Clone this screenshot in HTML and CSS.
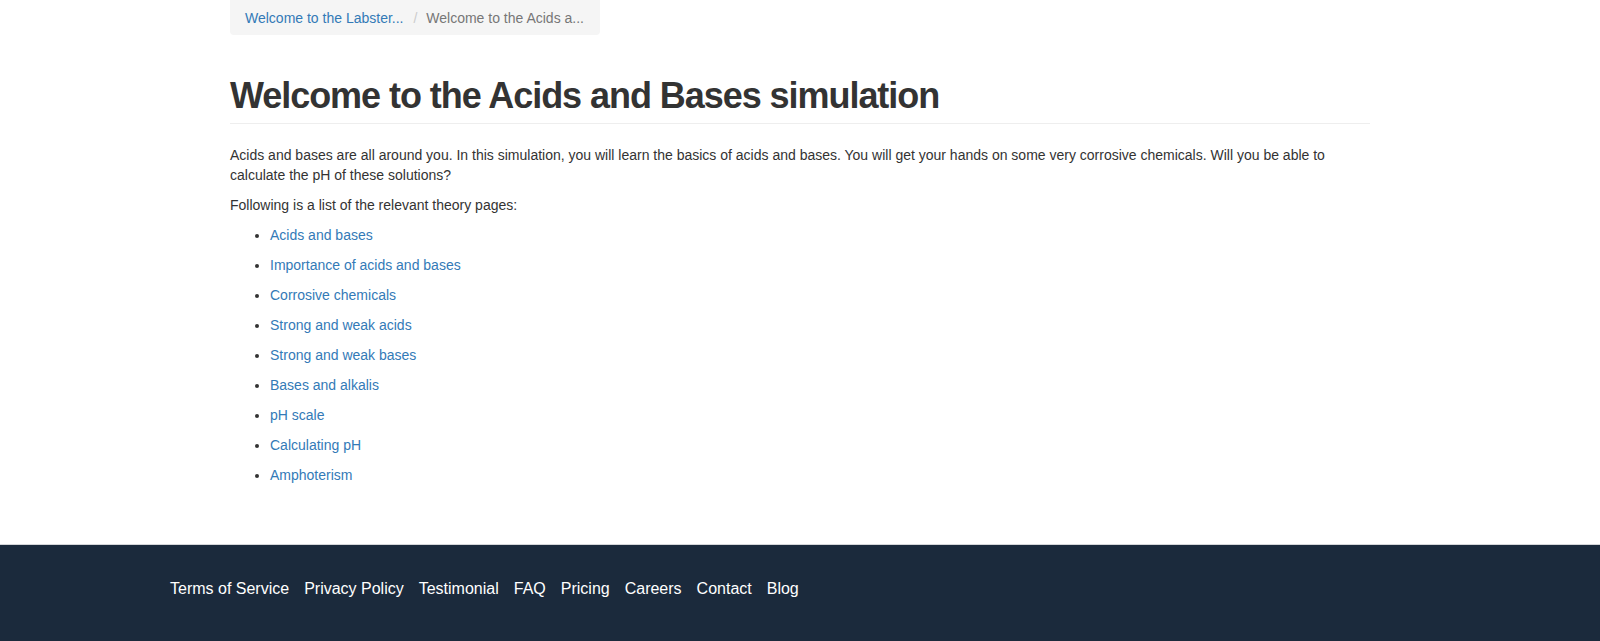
FILE: index.html
```html
<!DOCTYPE html>
<html lang="en">
<head>
<meta charset="utf-8">
<title>Welcome to the Acids and Bases simulation</title>
<link rel="stylesheet" href="styles.css">
</head>
<body>
<div class="page">
  <main class="container">
    <ol class="breadcrumb">
      <li><a href="#">Welcome to the Labster...</a></li>
      <li class="active">Welcome to the Acids a...</li>
    </ol>
    <div class="page-header">
      <h1>Welcome to the Acids and Bases simulation</h1>
    </div>
    <p>Acids and bases are all around you. In this simulation, you will learn the basics of acids and bases. You will get your hands on some very corrosive chemicals. Will you be able to calculate the pH of these solutions?</p>
    <p>Following is a list of the relevant theory pages:</p>
    <ul class="theory">
      <li><a href="#">Acids and bases</a></li>
      <li><a href="#">Importance of acids and bases</a></li>
      <li><a href="#">Corrosive chemicals</a></li>
      <li><a href="#">Strong and weak acids</a></li>
      <li><a href="#">Strong and weak bases</a></li>
      <li><a href="#">Bases and alkalis</a></li>
      <li><a href="#">pH scale</a></li>
      <li><a href="#">Calculating pH</a></li>
      <li><a href="#">Amphoterism</a></li>
    </ul>
  </main>
  <footer class="footer">
    <nav class="footer-nav">
      <a href="#">Terms of Service</a>
      <a href="#">Privacy Policy</a>
      <a href="#">Testimonial</a>
      <a href="#">FAQ</a>
      <a href="#">Pricing</a>
      <a href="#">Careers</a>
      <a href="#">Contact</a>
      <a href="#">Blog</a>
    </nav>
  </footer>
</div>
</body>
</html>
```
FILE: styles.css
```css
* { box-sizing: border-box; }

html, body {
  margin: 0;
  padding: 0;
  background: #fff;
}

body {
  font-family: "Liberation Sans", Arial, Helvetica, sans-serif;
  font-size: 14px;
  line-height: 20px;
  color: #333;
}

a {
  color: #337ab7;
  text-decoration: none;
}

.container {
  width: 1170px;
  margin: 0 auto;
  padding: 0 15px;
}

.breadcrumb {
  display: inline-flex;
  list-style: none;
  margin: 0;
  padding: 8px 16px 7px 15px;
  background: #f5f5f5;
  border-radius: 0 0 4px 4px;
}

.breadcrumb li + li {
  margin-left: 5px;
}

.breadcrumb li + li::before {
  content: "/\00a0";
  padding: 0 5px;
  color: #ccc;
}

.breadcrumb .active {
  color: #777;
}

.page-header {
  margin: 41px 0 21px;
  padding-bottom: 7px;
  border-bottom: 1px solid #eee;
}

.page-header h1 {
  margin: 0;
  font-size: 36px;
  line-height: 39.6px;
  font-weight: 700;
  letter-spacing: -1.05px;
  color: #333;
}

p {
  margin: 0 0 10px;
}

.theory {
  margin: 0;
  padding-left: 40px;
}

.theory li {
  margin-bottom: 10px;
}

.footer {
  margin-top: 59px;
  background: #1b2a3c;
  border-top: 1px solid #d4d6d9;
  height: 120px;
  padding-top: 33px;
}

.footer-nav {
  width: 1260px;
  margin: 0 auto;
  display: flex;
  gap: 15px;
}

.footer-nav a {
  color: #fff;
  font-size: 16px;
  line-height: 22px;
}
```
